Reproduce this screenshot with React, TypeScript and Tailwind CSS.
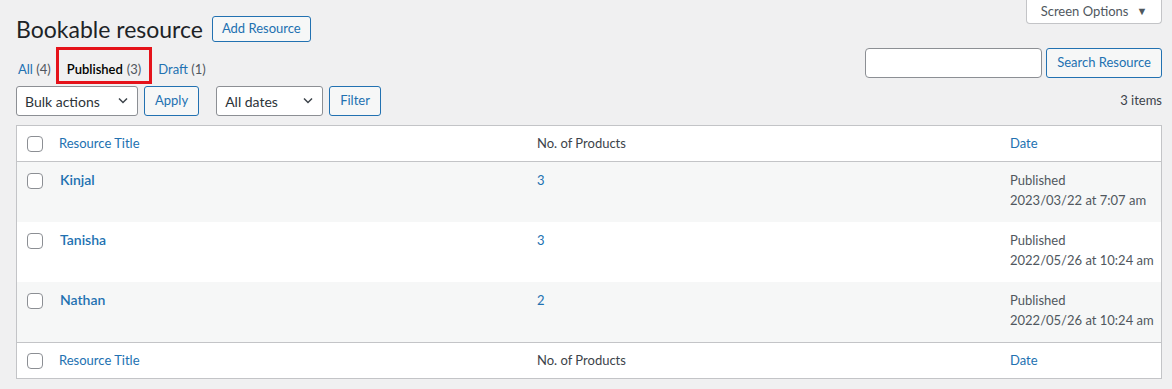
import { useState } from 'react';

const font = { fontFamily: '"Segoe UI", Lato, "Noto Sans", sans-serif' };

type Row = { id: number; title: string; products: number; date: string };

const rows: Row[] = [
  { id: 1, title: 'Kinjal', products: 3, date: '2023/03/22 at 7:07 am' },
  { id: 2, title: 'Tanisha', products: 3, date: '2022/05/26 at 10:24 am' },
  { id: 3, title: 'Nathan', products: 2, date: '2022/05/26 at 10:24 am' },
];

const Checkbox = () => (
  <span className="block w-4 h-4 rounded-[4px] border border-[#8c8f94] bg-white" />
);

const Chevron = () => (
  <svg width="16" height="16" viewBox="0 0 20 20" className="text-[#3c434a]">
    <path d="M5 7l5 5 5-5" fill="none" stroke="currentColor" strokeWidth="1.8" />
  </svg>
);

const Select = ({ label, width }: { label: string; width: string }) => (
  <div
    className={`${width} h-[30px] flex items-center justify-between pl-2 pr-[6px] bg-white border border-[#8c8f94] rounded-[3px] text-[14px] text-[#2c3338]`}
  >
    <span>{label}</span>
    <Chevron />
  </div>
);

const SecondaryButton = ({ label }: { label: string }) => (
  <button className="h-[30px] px-[10px] bg-[#f6f7f7] border border-[#2271b1] rounded-[3px] text-[13px] text-[#2271b1]">
    {label}
  </button>
);

const HeadRow = ({ top }: { top?: boolean }) => (
  <div
    className={`flex h-[36px] items-center text-[13px] bg-white ${
      top ? 'border-b border-[#c3c4c7]' : 'border-t border-[#c3c4c7]'
    }`}
  >
    <div className="w-[32px] pl-[10px]">
      <Checkbox />
    </div>
    <div className="w-[478px] pl-[10px] text-[#2271b1]">Resource Title</div>
    <div className="w-[473px] pl-[10px] text-[#3c434a]">No. of Products</div>
    <div className="flex-1 pl-[10px] text-[#2271b1]">Date</div>
  </div>
);

export default function App() {
  const [filter] = useState('published');

  return (
    <div className="min-h-screen bg-[#f0f0f1] relative" style={font}>
      <div className="absolute right-[10px] top-0 h-[24px] w-[136px] flex items-center justify-center gap-2 bg-white border border-t-0 border-[#c3c4c7] rounded-b-[4px] text-[13px] text-[#50575e]">
        <span>Screen Options</span>
        <span className="text-[11px]">▼</span>
      </div>

      <div className="pl-4 pr-[10px] pt-4">
        <div className="flex items-center gap-[9px] h-[26px]">
          <h1 className="text-[23px] text-[#1d2327] leading-none">Bookable resource</h1>
          <button className="h-[26px] px-[9px] bg-[#f6f7f7] border border-[#2271b1] rounded-[3px] text-[13px] text-[#2271b1]">
            Add Resource
          </button>
        </div>

        <div className="flex items-start justify-between mt-[5px]">
          <div className="flex items-start h-[37px] text-[13px] text-[#50575e] leading-[20px]">
            <span className="pl-[2px] pt-[12px]">
              <span className="text-[#2271b1]">All</span> (4)
            </span>
            <span
              className={`ml-[5px] h-[37px] px-[8px] pt-[9px] border-[3px] border-[#e5121a] ${
                filter === 'published' ? 'text-black' : ''
              }`}
            >
              <span className="font-semibold">Published</span>
              <span className="ml-1 text-[#50575e]">(3)</span>
            </span>
            <span className="ml-[6px] pt-[12px]">
              <span className="text-[#2271b1]">Draft</span> (1)
            </span>
          </div>
          <div className="flex items-center gap-1 mt-[1px]">
            <input className="w-[177px] h-[30px] bg-white border border-[#8c8f94] rounded-[4px] outline-none" />
            <SecondaryButton label="Search Resource" />
          </div>
        </div>

        <div className="flex items-center mt-[2px] h-[30px]">
          <Select label="Bulk actions" width="w-[122px]" />
          <div className="ml-[6px]">
            <SecondaryButton label="Apply" />
          </div>
          <div className="ml-[17px]">
            <Select label="All dates" width="w-[107px]" />
          </div>
          <div className="ml-[6px]">
            <SecondaryButton label="Filter" />
          </div>
          <span className="ml-auto text-[13px] text-[#3c434a]">3 items</span>
        </div>

        <div className="mt-[9px] border border-[#c3c4c7] bg-white">
          <HeadRow top />
          {rows.map((r, i) => (
            <div
              key={r.id}
              className={`flex h-[60px] items-start pt-[8px] ${i % 2 === 0 ? 'bg-[#f6f7f7]' : 'bg-white'}`}
            >
              <div className="w-[32px] pl-[10px] pt-[3px]">
                <Checkbox />
              </div>
              <div className="w-[478px] pl-[11px] text-[14px] font-semibold text-[#2271b1] leading-[20px]">
                {r.title}
              </div>
              <div className="w-[473px] pl-[10px] text-[13px] text-[#2271b1] leading-[20px]">{r.products}</div>
              <div className="flex-1 pl-[10px] text-[13px] text-[#50575e] leading-[20px]">
                <div>Published</div>
                <div>{r.date}</div>
              </div>
            </div>
          ))}
          <HeadRow />
        </div>
      </div>
    </div>
  );
}
